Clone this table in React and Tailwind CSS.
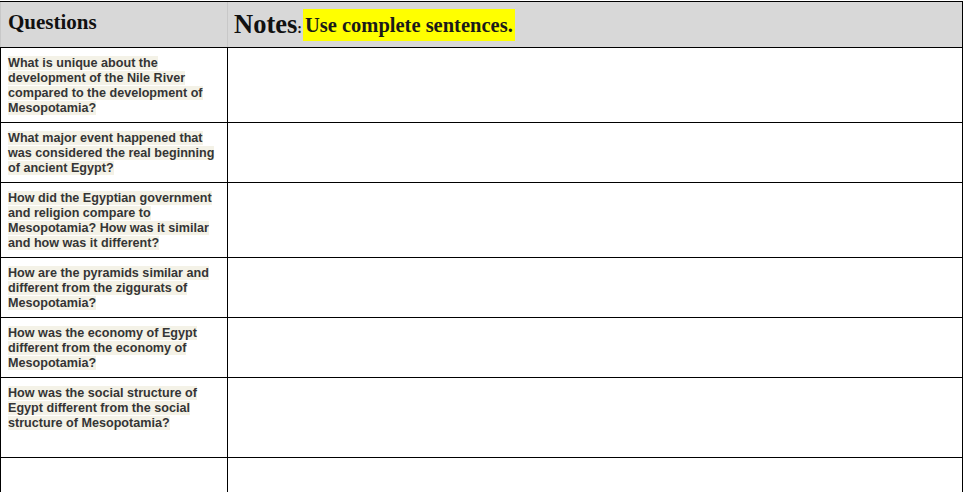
const questions = [
  { h: 'h-[75px]', text: 'What is unique about the development of the Nile River compared to the development of Mesopotamia?' },
  { h: 'h-[60px]', text: 'What major event happened that was considered the real beginning of ancient Egypt?' },
  { h: 'h-[75px]', text: 'How did the Egyptian government and religion compare to Mesopotamia? How was it similar and how was it different?' },
  { h: 'h-[60px]', text: 'How are the pyramids similar and different from the ziggurats of Mesopotamia?' },
  { h: 'h-[60px]', text: 'How was the economy of Egypt different from the economy of Mesopotamia?' },
  { h: 'h-[80px]', text: 'How was the social structure of Egypt different from the social structure of Mesopotamia?' },
  { h: 'h-[60px]', text: '' },
]

export default function App() {
  return (
    <div className="w-[966px] h-[492px] overflow-hidden bg-white pt-px">
      <div className="w-[963px] border-r border-black">
        {/* HEADER */}
        <div className="grid grid-cols-[228px_1fr] h-[47px] bg-[#d8d8d8] border-t border-black border-b border-b-black">
          <div className="border-l border-l-[#c8c8c8] border-r border-r-[#c8c8c8] px-[7px] pt-[7px] font-['Liberation_Serif',serif] font-bold text-[21px] leading-[26px] text-[#111]">
            Questions
          </div>
          <div className="flex items-center pl-[6px] font-['Liberation_Serif',serif] font-bold text-[#111]">
            <span className="text-[26.5px] leading-none">Notes</span>
            <span className="text-[14px] leading-none mt-[8px]">:</span>
            <span className="ml-px bg-[#ffff00] text-[20.5px] leading-[32px] px-[2px] text-[#1a1a1a]">Use complete sentences.</span>
          </div>
        </div>

        {/* ROWS */}
        {questions.map((q, i) => (
          <div key={i} className={`grid grid-cols-[228px_1fr] ${q.h} border-b border-black`}>
            <div className="border-l border-black border-r border-r-black pl-[7px] pr-[4px] pt-[8px] font-['Liberation_Sans',Arial,sans-serif] font-bold text-[12.6px] leading-[15px] text-[#353535]">
              {q.text && (
                <span className="bg-[#f4f2e7] [box-decoration-break:clone]">{q.text}</span>
              )}
            </div>
            <div />
          </div>
        ))}
      </div>
    </div>
  )
}
